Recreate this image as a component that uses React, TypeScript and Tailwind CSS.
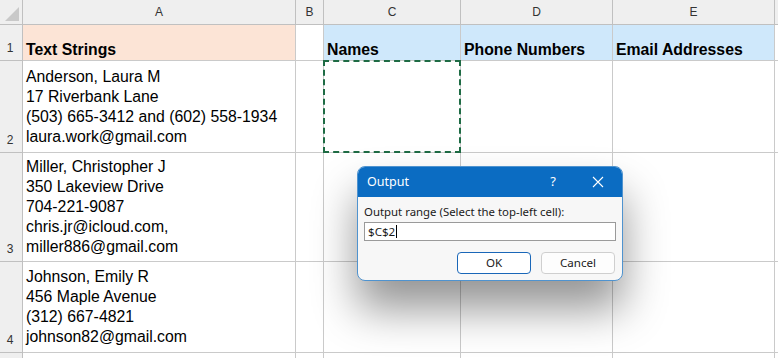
import React from "react";

function ColHead({ label }: { label: string }) {
  return (
    <div className="flex items-center justify-center border-r border-b border-[#c0c0c0] bg-[#efefef] text-[12px] text-[#333]">
      {label}
    </div>
  );
}

function RowHead({ label }: { label: string }) {
  return (
    <div className="flex items-end justify-center border-r border-b border-[#c0c0c0] bg-[#efefef] pb-[5px] pr-[2px] text-[12px] leading-[14px] text-[#333]">
      {label}
    </div>
  );
}

function Cell({
  lines,
  bold,
  bg,
  pb = "pb-[5px]",
}: {
  lines?: string[];
  bold?: boolean;
  bg?: string;
  pb?: string;
}) {
  return (
    <div
      className={`flex flex-col justify-end overflow-hidden whitespace-nowrap border-r border-b border-[#cacaca] pl-[3px] ${pb} text-[15.8px] leading-[20px] text-black ${
        bold ? "font-bold" : ""
      } ${bg ?? "bg-white"}`}
    >
      {lines?.map((l, i) => (
        <div key={i}>{l}</div>
      ))}
    </div>
  );
}

export default function App() {
  return (
    <div
      className="relative h-[358px] w-[778px] overflow-hidden bg-white"
      style={{ fontFamily: '"Liberation Sans", Arial, sans-serif' }}
    >
      <div className="grid grid-cols-[23px_273px_28px_137px_152px_162px_1fr] grid-rows-[25px_36px_92px_109px_91px_1fr]">
        {/* header row */}
        <div className="relative border-r border-b border-[#c0c0c0] bg-[#efefef]">
          <div className="absolute bottom-[3px] right-[3px] h-0 w-0 border-b-[14px] border-l-[14px] border-b-[#c9c9c9] border-l-transparent" />
        </div>
        <ColHead label="A" />
        <ColHead label="B" />
        <ColHead label="C" />
        <ColHead label="D" />
        <ColHead label="E" />
        <div className="border-b border-[#c0c0c0] bg-[#efefef]" />

        {/* row 1 */}
        <RowHead label="1" />
        <Cell lines={["Text Strings"]} bold bg="bg-[#fce4d6]" pb="pb-0" />
        <Cell />
        <Cell lines={["Names"]} bold bg="bg-[#cfe8fb]" pb="pb-0" />
        <Cell lines={["Phone Numbers"]} bold bg="bg-[#cfe8fb]" pb="pb-0" />
        <Cell lines={["Email Addresses"]} bold bg="bg-[#cfe8fb]" pb="pb-0" />
        <div className="border-b border-[#cacaca]" />

        {/* row 2 */}
        <RowHead label="2" />
        <Cell
          lines={[
            "Anderson, Laura M",
            "17 Riverbank Lane",
            "(503) 665-3412 and (602) 558-1934",
            "laura.work@gmail.com",
          ]}
        />
        <Cell />
        <div className="relative border-r border-b border-[#cacaca]">
          <div className="absolute -left-[1px] -top-[1px] bottom-[-1px] right-[-1px] border-2 border-dashed border-[#1e6b44]" />
        </div>
        <Cell />
        <Cell />
        <div className="border-b border-[#cacaca]" />

        {/* row 3 */}
        <RowHead label="3" />
        <Cell
          pb="pb-[4px]"
          lines={[
            "Miller, Christopher J",
            "350 Lakeview Drive",
            "704-221-9087",
            "chris.jr@icloud.com,",
            "miller886@gmail.com",
          ]}
        />
        <Cell />
        <Cell />
        <Cell />
        <Cell />
        <div className="border-b border-[#cacaca]" />

        {/* row 4 */}
        <RowHead label="4" />
        <Cell
          lines={[
            "Johnson, Emily R",
            "456 Maple Avenue",
            "(312) 667-4821",
            "johnson82@gmail.com",
          ]}
        />
        <Cell />
        <Cell />
        <Cell />
        <Cell />
        <div className="border-b border-[#cacaca]" />

        {/* row 5 */}
        <RowHead label="" />
        <Cell />
        <Cell />
        <Cell />
        <Cell />
        <Cell />
        <div />
      </div>

      {/* dialog */}
      <div
        className="absolute left-[357px] top-[166px] flex h-[115px] w-[266px] flex-col overflow-hidden rounded-[8px] border border-[#4f93cf] bg-[#f7f7f7] shadow-[0_28px_44px_rgba(0,0,0,0.42)]"
        style={{ fontFamily: '"Segoe UI", "Noto Sans", "Open Sans", sans-serif' }}
      >
        <div className="flex h-[30px] items-center bg-[#0b6cc2] pl-[9px] text-[12.5px] text-white">
          <span className="flex-1">Output</span>
          <span className="mr-[36px] text-[13px]">?</span>
          <svg width="12" height="12" viewBox="0 0 12 12" className="mr-[18px]">
            <path d="M1 1 L11 11 M11 1 L1 11" stroke="white" strokeWidth="1.1" fill="none" />
          </svg>
        </div>
        <div className="flex flex-col px-[6px] pt-[7px]">
          <div className="text-[11.4px] leading-[15px] text-[#1a1a1a]">
            Output range (Select the top-left cell):
          </div>
          <div className="mt-[3px] flex h-[19px] w-[252px] items-center border border-[#9a9a9a] bg-white pl-[3px] text-[11.6px] text-[#1a1a1a]">
            $C$2<span className="ml-[1px] inline-block h-[13px] w-[1px] bg-black" />
          </div>
          <div className="mt-[11px] flex justify-end gap-[10px] pr-[1px]">
            <div className="flex h-[22px] w-[74px] items-center justify-center rounded-[4px] border border-[#1a67b8] bg-white text-[11.6px] text-[#1a1a1a]">
              OK
            </div>
            <div className="flex h-[22px] w-[74px] items-center justify-center rounded-[4px] border border-[#cfcfcf] bg-[#fdfdfd] text-[11.6px] text-[#1a1a1a]">
              Cancel
            </div>
          </div>
        </div>
      </div>
    </div>
  );
}
